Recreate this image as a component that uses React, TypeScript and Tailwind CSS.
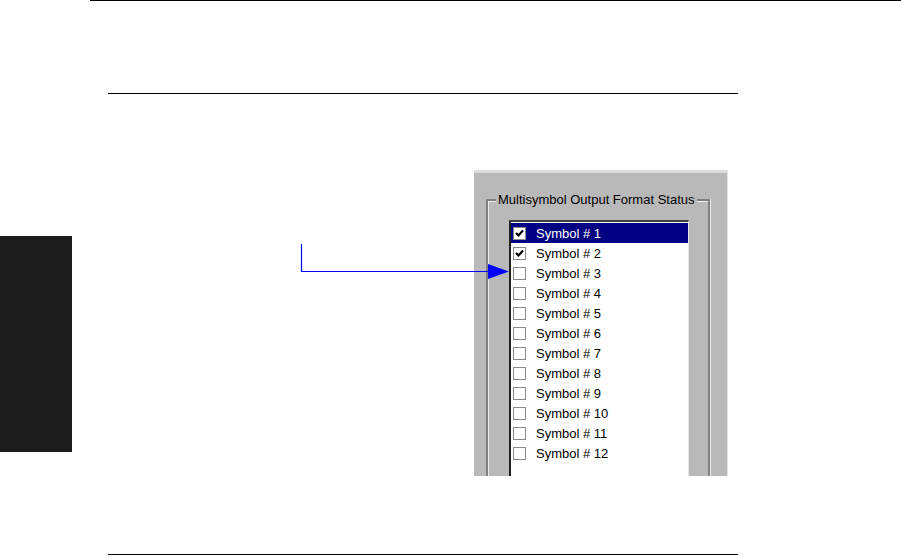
const symbols = Array.from({ length: 12 }, (_, i) => ({
  label: `Symbol # ${i + 1}`,
  checked: i < 2,
  selected: i === 0,
}));

function CheckBox({ checked }: { checked: boolean }) {
  return (
    <span className="flex h-[13px] w-[13px] shrink-0 items-center justify-center border border-[#8a8a8a] bg-white">
      {checked && (
        <svg width="11" height="11" viewBox="0 0 11 11">
          <path d="M2 5 L4.5 7.5 L9 2.5" fill="none" stroke="#000" strokeWidth="2.2" />
        </svg>
      )}
    </span>
  );
}

function SymbolList() {
  return (
    <div className="ml-[21px] mt-[12px] h-[300px] w-[180px] border-l-2 border-t-2 border-r border-l-[#202020] border-t-[#404040] border-r-[#e8e8e8] bg-white pt-px">
      {symbols.map(s => (
        <div
          key={s.label}
          className={`flex h-[20px] items-center gap-[10px] pl-[2px] text-[13px] ${
            s.selected ? 'bg-[#000080] text-white' : 'text-black'
          }`}
        >
          <CheckBox checked={s.checked} />
          <span className="leading-none">{s.label}</span>
        </div>
      ))}
    </div>
  );
}

function StatusPanel() {
  return (
    <div className="ml-[402px] h-[306px] w-[254px] overflow-hidden border-t-[3px] border-r border-t-[#dcdcdc] border-r-[#e4e4e4] bg-[#b9b9b9]">
      <div className="ml-[12px] mt-[26px] h-[320px] w-[224px] border-l-2 border-t-2 border-r-2 border-l-[#808080] border-t-[#808080] border-r-[#808080] shadow-[inset_1px_1px_0_#ececec,1px_0_0_#ececec]">
        <div className="-mt-[9px] ml-[8px] w-fit bg-[#b9b9b9] px-[2px] text-[13px] leading-[16px] text-black">
          Multisymbol Output Format Status
        </div>
        <SymbolList />
      </div>
    </div>
  );
}

export default function App() {
  return (
    <div
      className="relative h-[556px] w-[901px] overflow-hidden bg-white"
      style={{ fontFamily: '"Liberation Sans", Arial, sans-serif' }}
    >
      <div className="ml-[90px] h-px bg-black" />
      <div className="ml-[108px] mt-[92px] h-px w-[630px] bg-black" />

      <div className="mt-[76px] flex">
        <div className="mt-[66px] h-[216px] w-[72px] shrink-0 bg-[#1c1c1c]" />
        <StatusPanel />
      </div>

      <div className="ml-[108px] mt-[78px] h-px w-[630px] bg-black" />

      {/* callout arrow */}
      <svg className="absolute left-0 top-0" width="901" height="556" viewBox="0 0 901 556">
        <path d="M301.5 244 V271.5 H490" fill="none" stroke="#0000ff" strokeWidth="1.2" />
        <path d="M488 264 L509 271.5 L488 279 Z" fill="#0000ff" />
      </svg>
    </div>
  );
}
